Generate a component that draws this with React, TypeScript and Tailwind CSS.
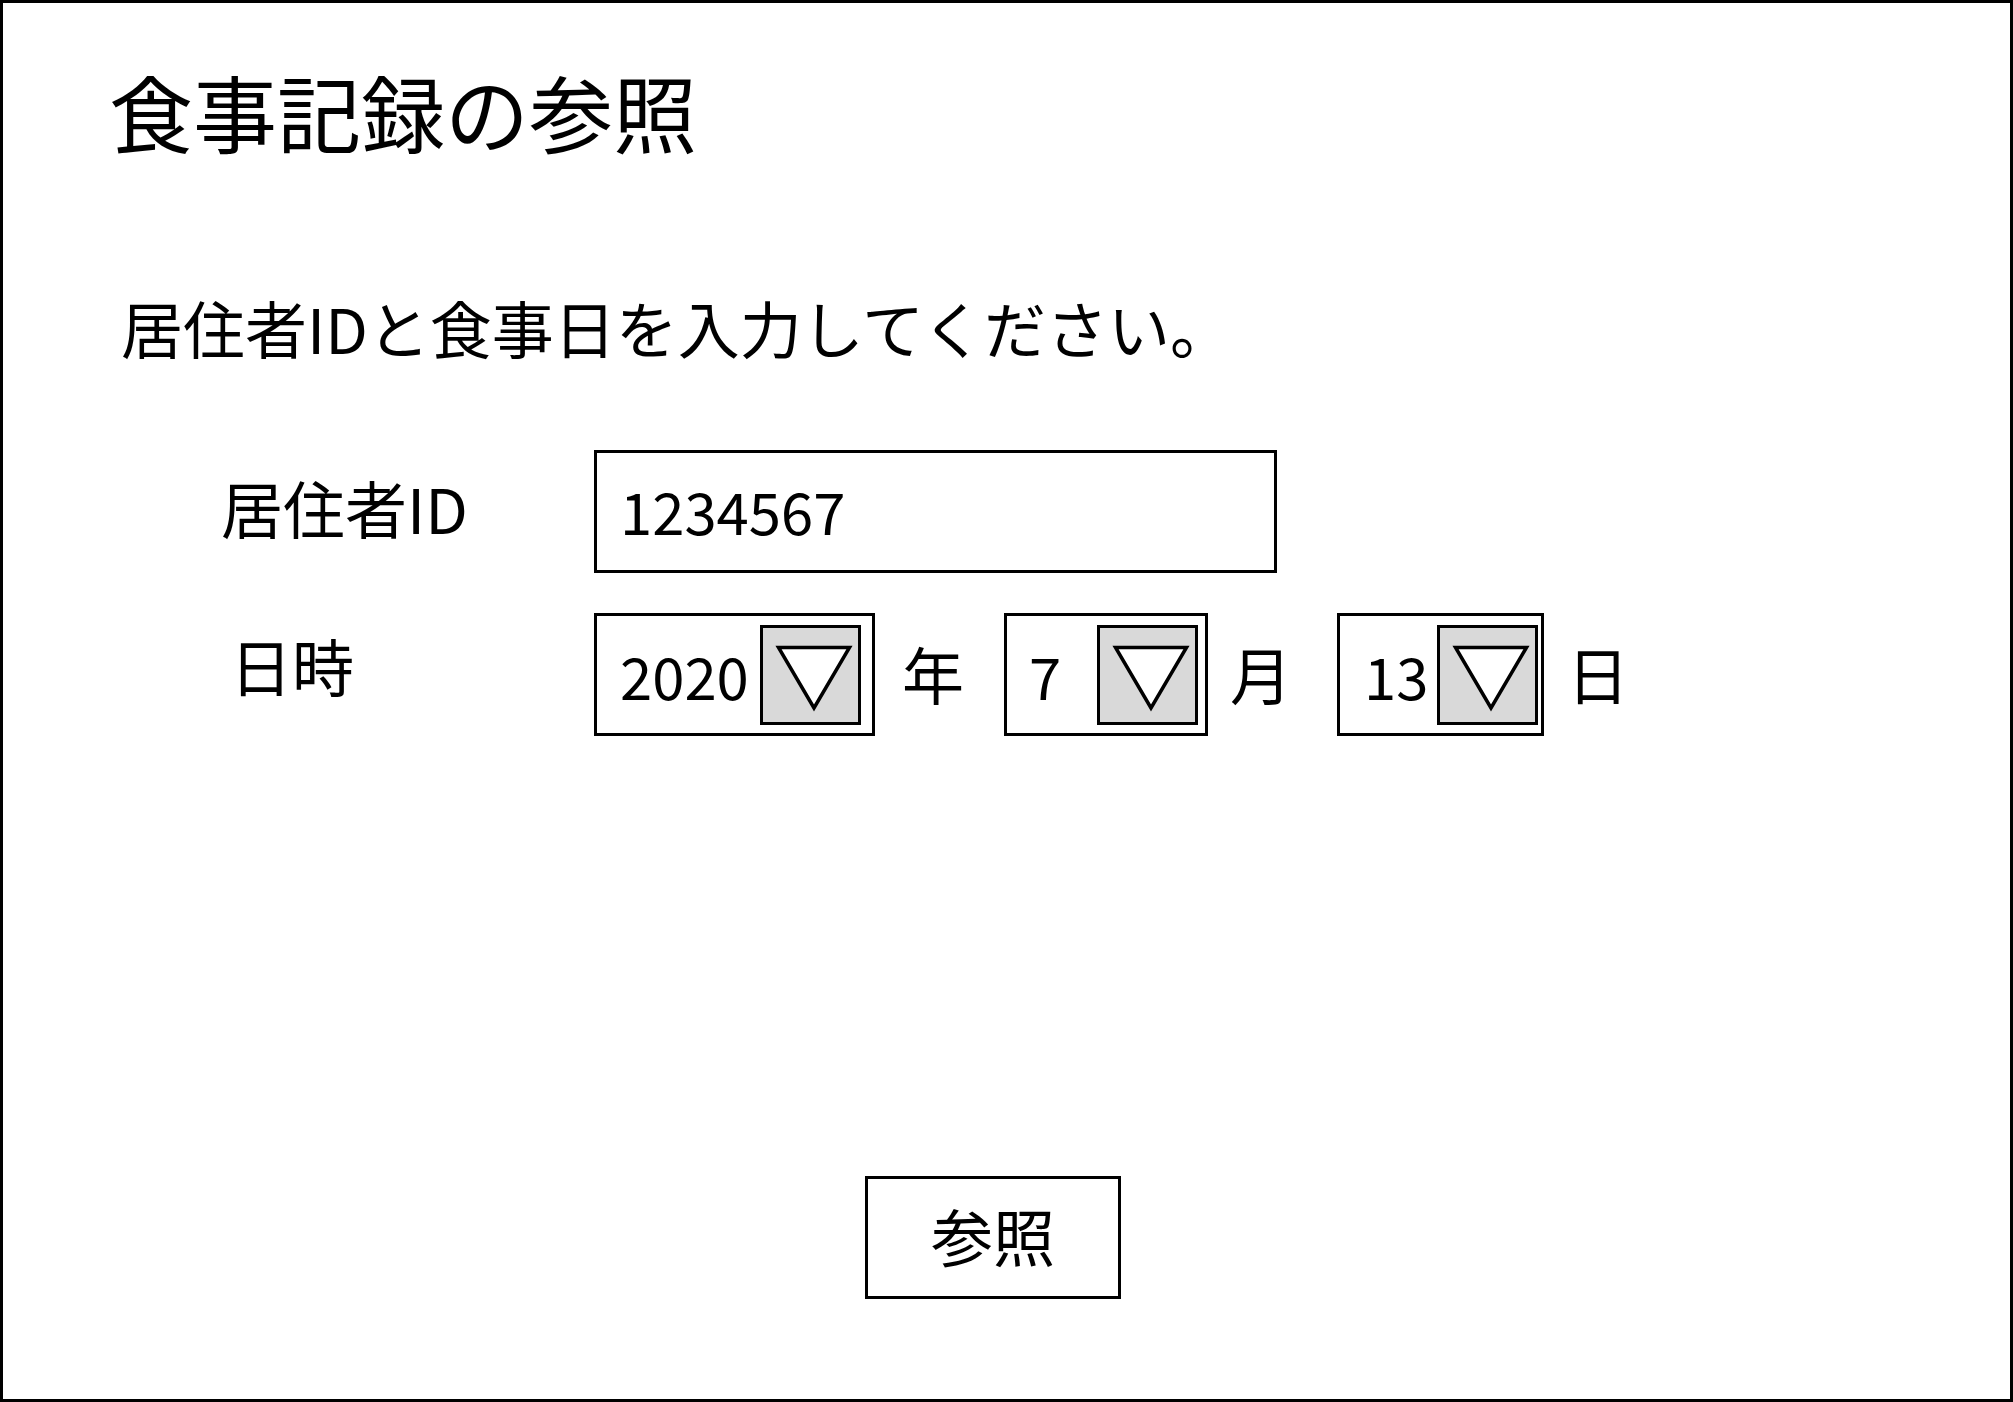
import React from "react";

function Arrow() {
  return (
    <div className="w-[101px] h-[100px] border-[3px] border-black bg-[#d9d9d9] shrink-0">
      <svg width="95" height="94" viewBox="0 0 95 94" className="block">
        <polygon points="15.5,19.5 86.5,19.5 51,80" fill="#ffffff" stroke="#000000" strokeWidth="3.5" strokeLinejoin="miter" />
      </svg>
    </div>
  );
}

function Select({ value, width, padLeft, padRight }: { value: string; width: string; padLeft: string; padRight: string }) {
  return (
    <div className={`${width} h-[123px] border-[3px] border-black bg-white flex items-center justify-between shrink-0 ${padLeft} ${padRight}`}>
      <span className="text-[58px] leading-none">{value}</span>
      <Arrow />
    </div>
  );
}

export default function App() {
  return (
    <div className="w-[2013px] h-[1402px] border-[3px] border-black bg-white text-black font-['Noto_Sans_CJK_JP',sans-serif] flex flex-col">
      <h1 className="text-[84px] leading-none font-normal ml-[106px] mt-[66px]">食事記録の参照</h1>
      <p className="text-[62px] leading-none ml-[118px] mt-[143px]">居住者IDと食事日を入力してください。</p>

      <div className="flex items-center mt-[92px] ml-[218px]">
        <div className="w-[373px] text-[62px] leading-none pb-[10px]">居住者ID</div>
        <div className="w-[683px] h-[123px] border-[3px] border-black flex items-center pl-[23px] pb-[4px]">
          <span className="text-[58px] leading-none">1234567</span>
        </div>
      </div>

      <div className="flex items-center mt-[40px] ml-[218px]">
        <div className="w-[373px] text-[62px] leading-none pb-[20px] pl-[9px]">日時</div>
        <Select value="2020" width="w-[281px]" padLeft="pl-[23px]" padRight="pr-[11px]" />
        <span className="text-[62px] leading-none ml-[27px] pb-[4px]">年</span>
        <div className="ml-[40px]">
          <Select value="7" width="w-[204px]" padLeft="pl-[22px]" padRight="pr-[7px]" />
        </div>
        <span className="text-[62px] leading-none ml-[22px] pb-[4px]">月</span>
        <div className="ml-[45px]">
          <Select value="13" width="w-[207px]" padLeft="pl-[24px]" padRight="pr-[3px]" />
        </div>
        <span className="text-[62px] leading-none ml-[23px] pb-[4px]">日</span>
      </div>

      <div className="mt-[440px] ml-[862px] w-[256px] h-[123px] border-[3px] border-black flex items-center justify-center">
        <span className="text-[62px] leading-none pb-[6px]">参照</span>
      </div>
    </div>
  );
}
